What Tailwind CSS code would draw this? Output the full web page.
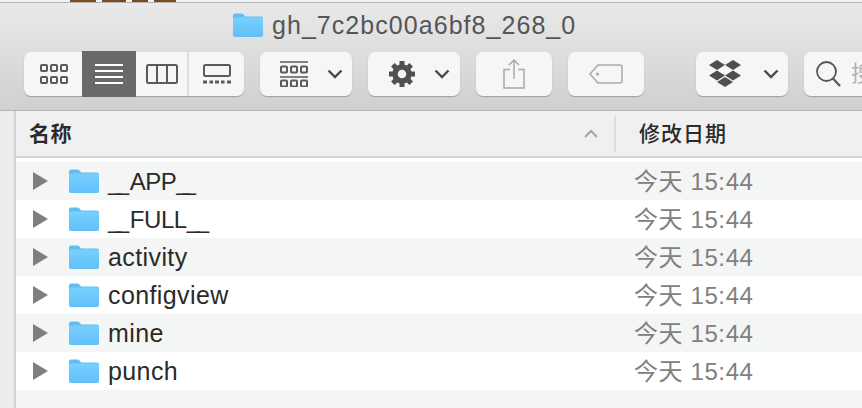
<!DOCTYPE html>
<html lang="en">
<head>
    <meta charset="UTF-8">
    <title>gh_7c2bc00a6bf8_268_0</title>
    <script src="https://cdn.jsdelivr.net/npm/@tailwindcss/browser@4"></script>
</head>
<body class="w-[862px] h-[408px] overflow-hidden bg-[#f4f5f5] font-['Liberation_Sans','Noto_Sans_CJK_SC',sans-serif]">

    <svg class="absolute w-0 h-0">
        <defs>
            <linearGradient id="fold" x1="0" y1="0" x2="0" y2="1">
                <stop offset="0" stop-color="#78d0fd"/>
                <stop offset="1" stop-color="#62c0fb"/>
            </linearGradient>
            <symbol id="folder" viewBox="0 0 30 24">
                <path d="M0 2.500Q0 .5 2 .5H8.500Q10 .5 11 2L12 3.500H28Q30 3.500 30 5.500V22Q30 24 28 24H2Q0 24 0 22Z" fill="#62bdf0"/>
                <path d="M0 6Q0 4.500 2 4.500H28Q30 4.500 30 6V21.500Q30 23 28 23H2Q0 23 0 21.500Z" fill="url(#fold)"/>
            </symbol>
            <symbol id="chevron" viewBox="0 0 16 10">
                <path d="M1.500 1.500L8 8L14.500 1.500" fill="none" stroke="#4a4a4a" stroke-width="2.400"/>
            </symbol>
        </defs>
    </svg>

    <!-- window strip -->
    <div class="h-[2px] bg-[#f3f3f3] pl-[70px] flex gap-[6px]">
        <div class="w-[26px] h-[2px] bg-[#7c4a20]"></div>
        <div class="w-[24px] h-[2px] bg-[#7c4a20]"></div>
        <div class="w-[16px] h-[2px] bg-[#7c4a20]"></div>
        <div class="w-[22px] h-[2px] bg-[#7c4a20]"></div>
    </div>

    <!-- toolbar -->
    <div class="h-[109px] bg-gradient-to-b from-[#e9e9e9] to-[#d0d0d0] border-t border-b border-[#b4b4b4]">
        <div class="h-[49px] pl-[233px] pb-[6px] flex items-center gap-[9px]">
            <svg class="w-[30px] h-[24px]"><use href="#folder"/></svg>
            <span class="mt-[2px] text-[25px] leading-none text-[#555555] tracking-[1.05px]">gh_7c2bc00a6bf8_268_0</span>
        </div>

        <div class="flex pl-[24px] items-start">
            <div class="shrink-0 flex h-[44px] w-[220px] rounded-[7px] bg-[#f6f6f6] shadow-[0_1px_1px_rgba(0,0,0,0.25)]">
                <div class="w-[58px] flex items-center justify-center pl-[2px]">
                    <svg width="30" height="22" fill="none" stroke="#5a5a5a" stroke-width="2">
                        <rect x="2" y="2" width="6" height="6" rx="1"/><rect x="12" y="2" width="6" height="6" rx="1"/><rect x="22" y="2" width="6" height="6" rx="1"/>
                        <rect x="2" y="14" width="6" height="6" rx="1"/><rect x="12" y="14" width="6" height="6" rx="1"/><rect x="22" y="14" width="6" height="6" rx="1"/>
                    </svg>
                </div>
                <div class="w-[54px] h-[46px] -mt-[1px] bg-[#696969] flex items-center justify-center">
                    <svg width="28" height="22" stroke="#ffffff" stroke-width="2">
                        <path d="M0 2H28M0 8H28M0 14H28M0 20H28"/>
                    </svg>
                </div>
                <div class="w-[53px] flex items-center justify-center border-r-2 border-[#dedede]">
                    <svg width="32" height="20" fill="none" stroke="#5a5a5a" stroke-width="2">
                        <rect x="1" y="1" width="30" height="18" rx="1.500"/><path d="M11 1V19M21 1V19"/>
                    </svg>
                </div>
                <div class="flex-1 flex items-center justify-center">
                    <svg width="28" height="20" fill="none" stroke="#5a5a5a" stroke-width="2">
                        <rect x="1" y="1" width="26" height="11" rx="1.500"/>
                        <path d="M0 18H4M6.500 18H10M12 18H16M18 18H21.500M24 18H28" stroke-width="3"/>
                    </svg>
                </div>
            </div>

            <div class="shrink-0 ml-[16px] w-[92px] h-[44px] rounded-[7px] bg-[#f6f6f6] shadow-[0_1px_1px_rgba(0,0,0,0.25)] flex items-center pl-[20px]">
                <svg width="28" height="26" fill="none" stroke="#5a5a5a" stroke-width="2">
                    <path d="M0 1H28M0 16H28" stroke-width="1.500"/>
                    <rect x="1" y="5.500" width="6" height="6" rx="1"/><rect x="11" y="5.500" width="6" height="6" rx="1"/><rect x="21" y="5.500" width="6" height="6" rx="1"/>
                    <rect x="1" y="19.500" width="6" height="6" rx="1"/><rect x="11" y="19.500" width="6" height="6" rx="1"/><rect x="21" y="19.500" width="6" height="6" rx="1"/>
                </svg>
                <svg class="ml-[19px] w-[16px] h-[10px]"><use href="#chevron"/></svg>
            </div>

            <div class="shrink-0 ml-[16px] w-[92px] h-[44px] rounded-[7px] bg-[#f6f6f6] shadow-[0_1px_1px_rgba(0,0,0,0.25)] flex items-center pl-[20px]">
                <svg width="28" height="28" viewBox="0 0 28 28">
                    <circle cx="14" cy="14" r="7" fill="none" stroke="#505050" stroke-width="5.500"/>
                    <path d="M14 14V1M14 14V27M14 14H1M14 14H27M14 14L4.800 4.800M14 14L23.200 4.800M14 14L4.800 23.200M14 14L23.200 23.200" stroke="#505050" stroke-width="5" stroke-dasharray="4 9 13" stroke-dashoffset="-9"/>
                </svg>
                <svg class="ml-[18px] w-[16px] h-[10px]"><use href="#chevron"/></svg>
            </div>

            <div class="shrink-0 ml-[16px] w-[76px] h-[44px] rounded-[7px] bg-[#f6f6f6] shadow-[0_1px_1px_rgba(0,0,0,0.25)] flex items-center justify-center">
                <svg width="22" height="30" fill="none" stroke="#a9a9a9" stroke-width="1.500">
                    <path d="M7 10.500H1V29H21V10.500H15M11 20V1.500M6 6L11 1L16 6"/>
                </svg>
            </div>

            <div class="shrink-0 ml-[16px] w-[76px] h-[44px] rounded-[7px] bg-[#f6f6f6] shadow-[0_1px_1px_rgba(0,0,0,0.25)] flex items-center justify-center">
                <svg width="34" height="20" fill="none" stroke="#a9a9a9" stroke-width="1.500">
                    <path d="M9 1H31Q33 1 33 3V17Q33 19 31 19H9L1 10Z"/>
                    <circle cx="8.500" cy="10" r="1.500" fill="#a9a9a9" stroke="none"/>
                </svg>
            </div>

            <div class="shrink-0 ml-[52px] w-[92px] h-[44px] rounded-[7px] bg-[#f6f6f6] shadow-[0_1px_1px_rgba(0,0,0,0.25)] flex items-center pl-[13px]">
                <svg width="32" height="28" viewBox="0 0 32 28" fill="#4f4f4f">
                    <path d="M8 0L16 5L8 10L0 5Z"/><path d="M24 0L32 5L24 10L16 5Z"/>
                    <path d="M8 10.500L16 15.500L8 20.500L0 15.500Z"/><path d="M24 10.500L32 15.500L24 20.500L16 15.500Z"/>
                    <path d="M16 17L24 22L16 27L8 22Z"/>
                </svg>
                <svg class="ml-[22px] w-[16px] h-[10px]"><use href="#chevron"/></svg>
            </div>

            <div class="shrink-0 ml-[16px] w-[100px] h-[44px] rounded-[7px] bg-[#f6f6f6] shadow-[0_1px_1px_rgba(0,0,0,0.25)] flex items-center pl-[11px] gap-[10px]">
                <svg width="26" height="28" fill="none" stroke="#555555" stroke-width="1.800">
                    <circle cx="11.500" cy="11.500" r="9.500"/><path d="M18 18.500L25 26" stroke-width="2.200"/>
                </svg>
                <span class="text-[22px] leading-none text-[#b0b0b0] whitespace-nowrap">搜索</span>
            </div>
        </div>
    </div>

    <div class="flex h-[297px]">
        <!-- sidebar edge -->
        <div class="w-[16px] shrink-0 bg-[#ececec] border-r-2 border-[#d2d2d2]"></div>

        <div class="flex-1 bg-[#f4f5f5]">
            <!-- column headers -->
            <div class="h-[47px] bg-[#f0f0f0] border-b-2 border-[#d6d6d6] flex items-center">
                <div class="w-[600px] pl-[13px] flex items-center justify-between pr-[16px] h-[36px] border-r-2 border-[#dcdcdc]">
                    <span class="text-[21px] tracking-[0.5px] font-bold text-[#2b2b2b]">名称</span>
                    <svg width="14" height="9" fill="none" stroke="#a5a5a5" stroke-width="2"><path d="M1 8L7 2L13 8"/></svg>
                </div>
                <span class="ml-[23px] text-[21px] tracking-[1px] font-medium text-[#2b2b2b]">修改日期</span>
            </div>
            <div class="h-[4px] bg-white"></div>

            <!-- rows -->
            <div class="h-[38px] bg-[#f4f5f5] flex items-center">
                <svg class="ml-[17px] shrink-0" width="15" height="18" fill="#7f7f7f"><path d="M0 0L15 9L0 18Z"/></svg>
                <svg class="ml-[21px] shrink-0 w-[30px] h-[24px]"><use href="#folder"/></svg>
                <span class="ml-[9px] w-[526px] mt-[2px] text-[24px] text-[#2a2a2a]"><span class="tracking-[-5.500px]">__</span><span class="ml-[6px] tracking-[-0.5px]">APP</span><span class="tracking-[-7px]">__</span></span>
                <span class="mt-[2px] text-[24px] tracking-[0.6px] text-[#808080]">今天 15:44</span>
            </div>
            <div class="h-[38px] bg-white flex items-center">
                <svg class="ml-[17px] shrink-0" width="15" height="18" fill="#7f7f7f"><path d="M0 0L15 9L0 18Z"/></svg>
                <svg class="ml-[21px] shrink-0 w-[30px] h-[24px]"><use href="#folder"/></svg>
                <span class="ml-[9px] w-[526px] mt-[2px] text-[24px] text-[#2a2a2a]"><span class="tracking-[-5.500px]">__</span><span class="ml-[6px] tracking-[-0.4px]">FULL</span><span class="tracking-[-4.500px]">__</span></span>
                <span class="mt-[2px] text-[24px] tracking-[0.6px] text-[#808080]">今天 15:44</span>
            </div>
            <div class="h-[38px] bg-[#f4f5f5] flex items-center">
                <svg class="ml-[17px] shrink-0" width="15" height="18" fill="#7f7f7f"><path d="M0 0L15 9L0 18Z"/></svg>
                <svg class="ml-[21px] shrink-0 w-[30px] h-[24px]"><use href="#folder"/></svg>
                <span class="ml-[9px] w-[526px] mt-[2px] text-[25px] tracking-[0.4px] text-[#2a2a2a]">activity</span>
                <span class="mt-[2px] text-[24px] tracking-[0.6px] text-[#808080]">今天 15:44</span>
            </div>
            <div class="h-[38px] bg-white flex items-center">
                <svg class="ml-[17px] shrink-0" width="15" height="18" fill="#7f7f7f"><path d="M0 0L15 9L0 18Z"/></svg>
                <svg class="ml-[21px] shrink-0 w-[30px] h-[24px]"><use href="#folder"/></svg>
                <span class="ml-[9px] w-[526px] mt-[2px] text-[25px] tracking-[0.4px] text-[#2a2a2a]">configview</span>
                <span class="mt-[2px] text-[24px] tracking-[0.6px] text-[#808080]">今天 15:44</span>
            </div>
            <div class="h-[38px] bg-[#f4f5f5] flex items-center">
                <svg class="ml-[17px] shrink-0" width="15" height="18" fill="#7f7f7f"><path d="M0 0L15 9L0 18Z"/></svg>
                <svg class="ml-[21px] shrink-0 w-[30px] h-[24px]"><use href="#folder"/></svg>
                <span class="ml-[9px] w-[526px] mt-[2px] text-[25px] tracking-[0.4px] text-[#2a2a2a]">mine</span>
                <span class="mt-[2px] text-[24px] tracking-[0.6px] text-[#808080]">今天 15:44</span>
            </div>
            <div class="h-[38px] bg-white flex items-center">
                <svg class="ml-[17px] shrink-0" width="15" height="18" fill="#7f7f7f"><path d="M0 0L15 9L0 18Z"/></svg>
                <svg class="ml-[21px] shrink-0 w-[30px] h-[24px]"><use href="#folder"/></svg>
                <span class="ml-[9px] w-[526px] mt-[2px] text-[25px] tracking-[0.4px] text-[#2a2a2a]">punch</span>
                <span class="mt-[2px] text-[24px] tracking-[0.6px] text-[#808080]">今天 15:44</span>
            </div>
        </div>
    </div>

</body>
</html>
